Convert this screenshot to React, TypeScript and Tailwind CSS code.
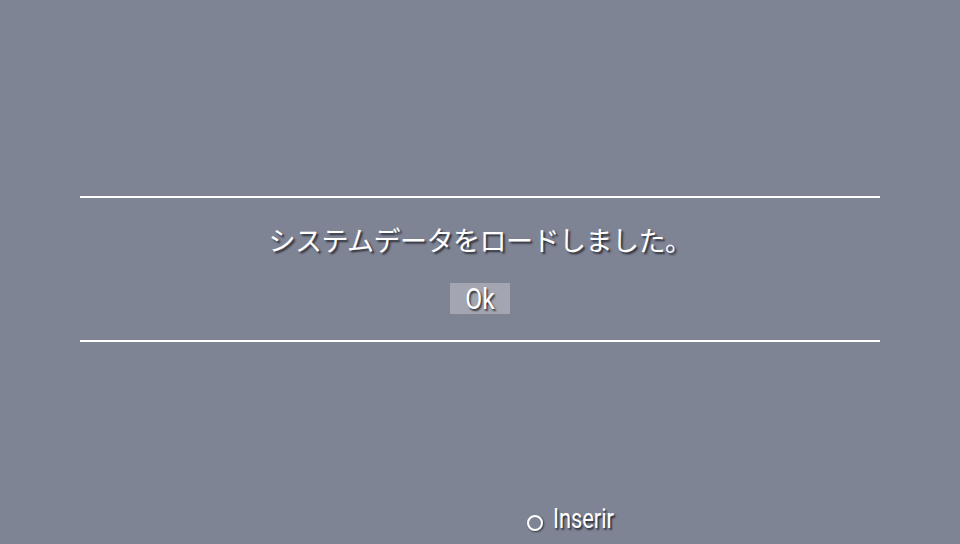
export default function App() {
  const shadow = { textShadow: '2px 2px 2px rgba(30,32,40,0.85)' }
  return (
    <div
      className="w-[960px] h-[544px] bg-[#7f8495] flex flex-col overflow-hidden"
      style={{ fontFamily: 'Roboto, "Noto Sans CJK JP", sans-serif' }}
    >
      <div className="h-[196px]" />
      <div className="mx-[80px] h-[2px] bg-white" />
      <div className="flex flex-col items-center">
        <div className="mt-[28px] h-[32px] text-[27px] leading-[32px] text-white tracking-[-0.5px]" style={shadow}>
          システムデータをロードしました。
        </div>
        <div className="mt-[25px] w-[60px] h-[31px] bg-[#a3a6b0] flex items-center justify-center">
          <span className="text-[30px] leading-[31px] text-white inline-block scale-x-[0.82]" style={shadow}>
            Ok
          </span>
        </div>
      </div>
      <div className="mt-[26px] mx-[80px] h-[2px] bg-white" />
      <div className="flex-1" />
      <div className="h-[44px] flex items-start pl-[527px]">
        <div
          className="w-[16px] h-[16px] rounded-full border-[2px] border-white mt-[15px]"
          style={{ boxShadow: '1px 1px 2px rgba(30,32,40,0.8)' }}
        />
        <span
          className="ml-[10px] mt-[3px] text-[28px] leading-[32px] text-white inline-block scale-x-[0.78] origin-left"
          style={shadow}
        >
          Inserir
        </span>
      </div>
    </div>
  )
}
